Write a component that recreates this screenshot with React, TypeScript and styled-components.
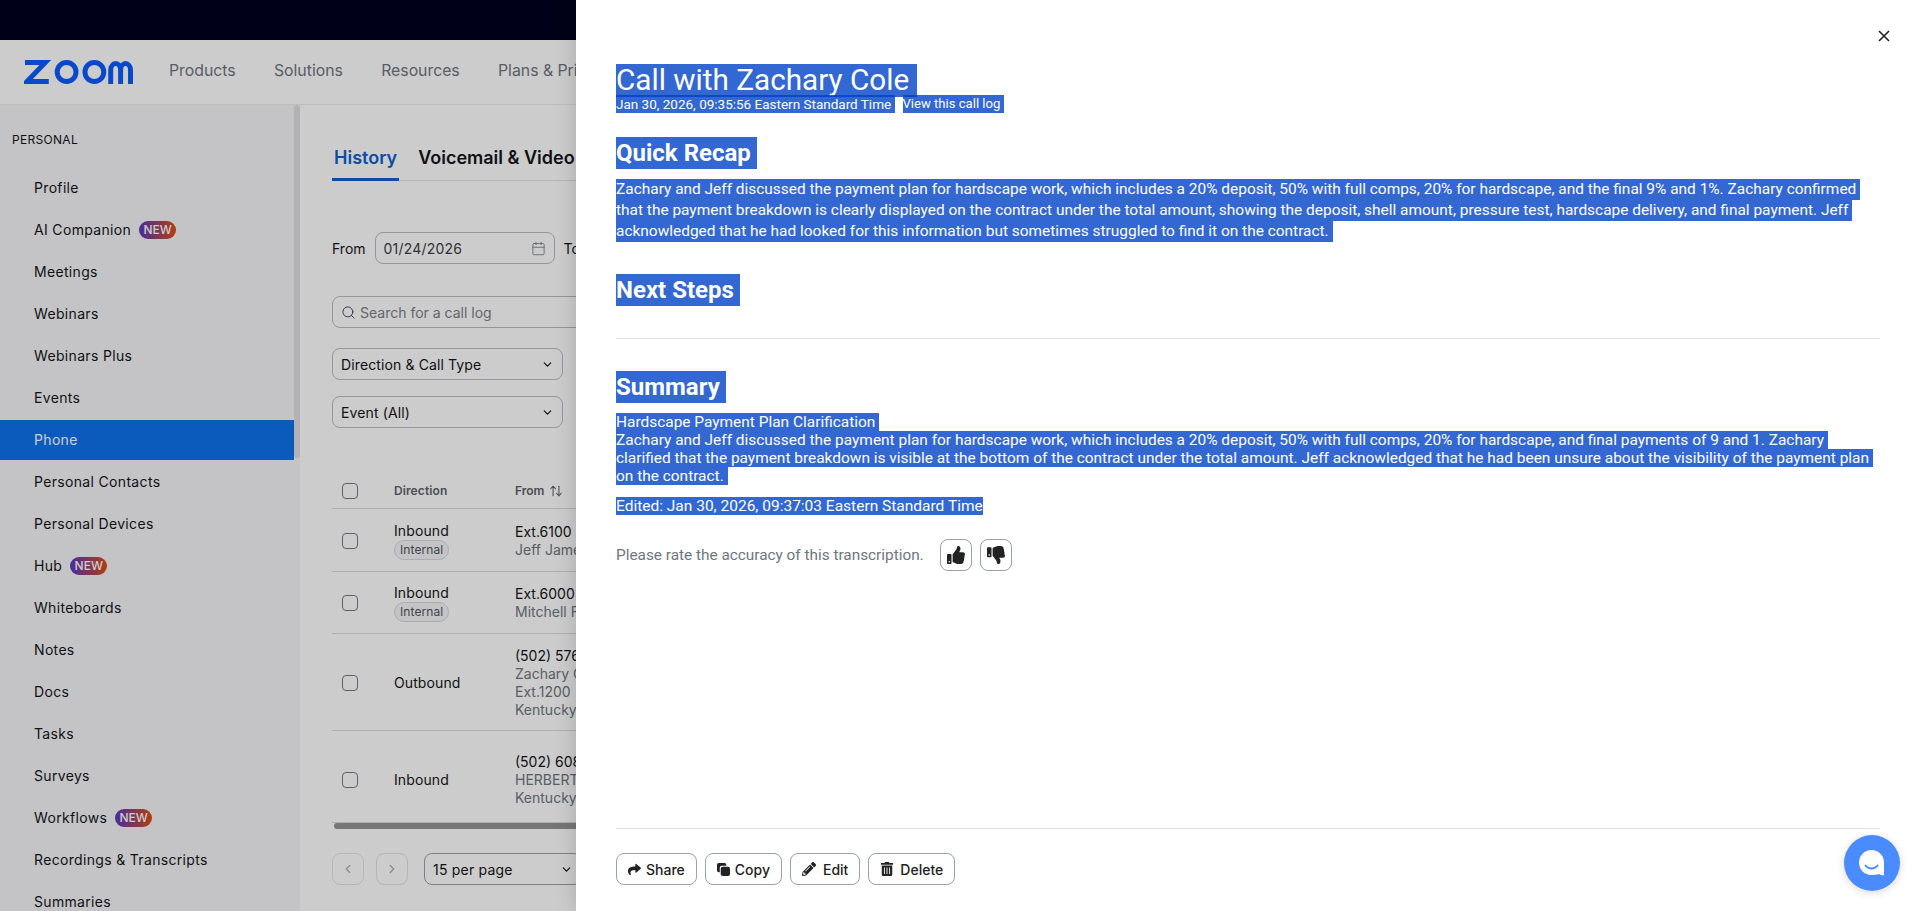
import React from 'react';
import styled, { createGlobalStyle } from 'styled-components';
import { FaShare, FaPencilAlt, FaTrashAlt, FaThumbsUp, FaThumbsDown } from 'react-icons/fa';
import { ArrowUpDown, Calendar, ChevronDown, ChevronLeft, ChevronRight, Search } from 'lucide-react';

const sideItems = [
  { label: 'Profile' },
  { label: 'AI Companion', isNew: true },
  { label: 'Meetings' },
  { label: 'Webinars' },
  { label: 'Webinars Plus' },
  { label: 'Events' },
  { label: 'Phone', active: true },
  { label: 'Personal Contacts' },
  { label: 'Personal Devices' },
  { label: 'Hub', isNew: true },
  { label: 'Whiteboards' },
  { label: 'Notes' },
  { label: 'Docs' },
  { label: 'Tasks' },
  { label: 'Surveys' },
  { label: 'Workflows', isNew: true },
  { label: 'Recordings & Transcripts' },
  { label: 'Summaries' },
];

const rows = [
  { direction: 'Inbound', internal: true, height: 63, from: ['Ext.6100', 'Jeff James'] },
  { direction: 'Inbound', internal: true, height: 62, from: ['Ext.6000', 'Mitchell Ford'] },
  {
    direction: 'Outbound',
    height: 97,
    from: ['(502) 576-0199', 'Zachary Cole', 'Ext.1200', 'Kentucky'],
  },
  { direction: 'Inbound', height: 92, top: 6, from: ['(502) 608-0142', 'HERBERT', 'Kentucky'] },
];

const GlobalStyle = createGlobalStyle`
  html, body {
    margin: 0;
    height: 100%;
    overflow: hidden;
    background: #fff;
    font-family: Inter, "Liberation Sans", sans-serif;
  }
  * {
    box-sizing: border-box;
  }
`;

function ZoomLogo() {
  return (
    <svg width="109" height="24" viewBox="0 0 110 24" fill="none" stroke="#0b5cff" strokeWidth="5">
      <path d="M1 2.500H21.500L3 21.500H25" />
      <circle cx="43" cy="12" r="9.500" />
      <circle cx="71" cy="12" r="9.500" />
      <path d="M87.500 24V10a5 6.500 0 0 1 10 0V24M97.500 10a5 6.500 0 0 1 10 0V24" />
    </svg>
  );
}

function CopyIcon() {
  return (
    <svg width="13" height="13" viewBox="0 0 14 14" fill="currentColor">
      <path d="M1.800 0h6.400A1.800 1.800 0 0 1 10 1.800V3H5a2 2 0 0 0-2 2v5H1.800A1.800 1.800 0 0 1 0 8.200V1.800A1.800 1.800 0 0 1 1.800 0z" />
      <rect x="4" y="4" width="10" height="10" rx="2.200" />
    </svg>
  );
}

function CloseIcon() {
  return (
    <svg width="12" height="12" viewBox="0 0 12 12" fill="none" stroke="#222" strokeWidth="1.600">
      <path d="M1 1L11 11M11 1L1 11" />
    </svg>
  );
}

function BubbleIcon() {
  return (
    <svg width="28" height="28" viewBox="0 0 28 28">
      <path d="M13.500 1C20.500 1 26 6.500 26 13.500V25.500C26 26.300 25.300 26.800 24.500 26.500L20.500 25C18.500 25.800 16 26 13.500 26C6.500 26 1 20.500 1 13.500S6.500 1 13.500 1z" fill="#fff" />
      <path d="M7.500 16.500C10.500 20.500 16.500 20.500 19.500 16.500" fill="none" stroke="#4a8cff" strokeWidth="1.800" strokeLinecap="round" />
    </svg>
  );
}

export default function App() {
  return (
    <Page>
      <GlobalStyle />
      <TopBar />
      <Header>
        <ZoomLogo />
        <NavList>
          <NavLink>Products</NavLink>
          <NavLink>Solutions</NavLink>
          <NavLink>Resources</NavLink>
          <NavLink>Plans &amp; Pricing</NavLink>
        </NavList>
      </Header>

      <Body>
        <Sidebar>
          <SideHeading>PERSONAL</SideHeading>
          {sideItems.map(item => (
            <SideItem key={item.label} $active={item.active}>
              {item.label}
              {item.isNew && <NewBadge>NEW</NewBadge>}
            </SideItem>
          ))}
          <SideScroll />
        </Sidebar>

        <Main>
          <Tabs>
            <Tab $active>History</Tab>
            <Tab>Voicemail &amp; Video</Tab>
          </Tabs>

          <DateRow>
            From
            <DateInput>
              01/24/2026
              <Calendar size={15} strokeWidth={1.3} color="#6e7680" />
            </DateInput>
            To
          </DateRow>

          <SearchBox>
            <Search size={15} strokeWidth={1.5} color="#3b4046" />
            Search for a call log
          </SearchBox>

          <FilterStack>
            <Select>
              Direction &amp; Call Type
              <ChevronDown size={13} strokeWidth={2.2} />
            </Select>
            <Select>
              Event (All)
              <ChevronDown size={13} strokeWidth={2.2} />
            </Select>
          </FilterStack>

          <TableHead>
            <CheckCell>
              <CheckBox />
            </CheckCell>
            <DirectionCell>Direction</DirectionCell>
            <SortCell>
              From
              <ArrowUpDown size={14} strokeWidth={1.8} />
            </SortCell>
          </TableHead>
          {rows.map(row => (
            <TableRow key={row.from[0]} $height={row.height} $top={row.top}>
              <CheckCell>
                <CheckBox />
              </CheckCell>
              <DirectionCell>
                {row.direction}
                {row.internal && <InternalChip>Internal</InternalChip>}
              </DirectionCell>
              <FromCell>
                {row.from.map((line, index) => (
                  <FromLine key={line} $muted={index > 0}>
                    {line}
                  </FromLine>
                ))}
              </FromCell>
            </TableRow>
          ))}
          <TableScroll />

          <Pagination>
            <PageButton>
              <ChevronLeft size={14} />
            </PageButton>
            <PageButton>
              <ChevronRight size={14} />
            </PageButton>
            <PerPage>
              15 per page
              <ChevronDown size={13} strokeWidth={2.2} />
            </PerPage>
          </Pagination>
        </Main>
      </Body>

      <Dim />

      <Panel>
        <CloseButton>
          <CloseIcon />
        </CloseButton>

        <Title>{'Call with Zachary Cole '}</Title>
        <MetaRow>
          <DateMeta>{'Jan 30, 2026, 09:35:56 Eastern Standard Time '}</DateMeta>
          <Meta>{'View this call log '}</Meta>
        </MetaRow>

        <Heading $top={24}>{'Quick Recap '}</Heading>
        <Paragraph>
          <Line>
            {'Zachary and Jeff discussed the payment plan for hardscape work, which includes a 20% deposit, 50% with full comps, 20% for hardscape, and the final 9% and 1%. Zachary confirmed '}
          </Line>
          <Line>
            {'that the payment breakdown is clearly displayed on the contract under the total amount, showing the deposit, shell amount, pressure test, hardscape delivery, and final payment. Jeff '}
          </Line>
          <Line>
            {'acknowledged that he had looked for this information but sometimes struggled to find it on the contract. '}
          </Line>
        </Paragraph>

        <Heading $top={32}>{'Next Steps '}</Heading>
        <Divider />

        <Heading $top={32}>{'Summary '}</Heading>
        <Paragraph>
          <Line $short>{'Hardscape Payment Plan Clarification '}</Line>
          <Line $short>
            {'Zachary and Jeff discussed the payment plan for hardscape work, which includes a 20% deposit, 50% with full comps, 20% for hardscape, and final payments of 9 and 1. Zachary '}
          </Line>
          <Line $short>
            {'clarified that the payment breakdown is visible at the bottom of the contract under the total amount. Jeff acknowledged that he had been unsure about the visibility of the payment plan '}
          </Line>
          <Line $short>{'on the contract. '}</Line>
        </Paragraph>
        <EditedLine>Edited: Jan 30, 2026, 09:37:03 Eastern Standard Time</EditedLine>

        <RatingRow>
          <RatingText>Please rate the accuracy of this transcription.</RatingText>
          <RateButton>
            <FaThumbsUp size={18} />
          </RateButton>
          <RateButton>
            <FaThumbsDown size={18} />
          </RateButton>
        </RatingRow>

        <Footer>
          <ActionButton>
            <FaShare size={13} />
            Share
          </ActionButton>
          <ActionButton>
            <CopyIcon />
            Copy
          </ActionButton>
          <ActionButton $gap={7}>
            <FaPencilAlt size={14} />
            Edit
          </ActionButton>
          <ActionButton $gap={6}>
            <FaTrashAlt size={14} />
            Delete
          </ActionButton>
        </Footer>
      </Panel>

      <ChatBubble>
        <BubbleIcon />
      </ChatBubble>
    </Page>
  );
}

const Page = styled.div`
  width: 1920px;
  height: 911px;
  overflow: hidden;
  position: relative;
  background: #fff;
  color: #131619;
  font-size: 14px;
`;

const TopBar = styled.div`
  height: 40px;
  background: #00001f;
`;

const Header = styled.div`
  height: 65px;
  padding: 0 24px;
  display: flex;
  align-items: center;
  background: #fff;
  border-bottom: 1px solid #ededf0;
`;

const NavList = styled.div`
  margin-left: 36px;
  display: flex;
  gap: 38.3px;
`;

const NavLink = styled.div`
  font-size: 15.8px;
  line-height: 24px;
  color: #6e7680;
  margin-top: -3px;
  white-space: nowrap;
`;

const Body = styled.div`
  display: flex;
  height: 806px;
`;

const Sidebar = styled.div`
  position: relative;
  width: 300px;
  flex-shrink: 0;
  padding-top: 24px;
  background: #f5f5f8;
  overflow: hidden;
`;

const SideScroll = styled.div`
  position: absolute;
  top: 0;
  right: 0;
  width: 6px;
  height: 353px;
  border-radius: 3px;
  background: #dfdfe2;
`;

const SideHeading = styled.div`
  padding-left: 12px;
  height: 39px;
  font-size: 12px;
  line-height: 22px;
  letter-spacing: 0.3px;
  color: #131619;
`;

const SideItem = styled.div<{ $active?: boolean }>`
  width: 294px;
  height: 40px;
  margin-bottom: 2px;
  padding: 0 0 1px 34px;
  display: flex;
  align-items: center;
  gap: 8px;
  font-size: 14px;
  letter-spacing: 0.33px;
  white-space: nowrap;
  background: ${p => (p.$active ? '#0e72ed' : 'transparent')};
  color: ${p => (p.$active ? '#fff' : '#131619')};
`;

const NewBadge = styled.span`
  width: 37px;
  height: 18px;
  border-radius: 9px;
  display: inline-flex;
  align-items: center;
  justify-content: center;
  font-size: 12px;
  font-weight: 500;
  letter-spacing: 0;
  color: #fff;
  background: linear-gradient(90deg, #5b39c4, #e14e12);
`;

const Main = styled.div`
  width: 560px;
  padding: 0 0 0 32px;
  overflow: hidden;
  background: #fff;
`;

const Tabs = styled.div`
  margin-top: 31px;
  height: 45px;
  width: 500px;
  display: flex;
  gap: 17px;
  border-bottom: 1px solid #e3e3e6;
`;

const Tab = styled.div<{ $active?: boolean }>`
  height: 45px;
  padding: 6px 2px 0;
  font-size: 18px;
  line-height: 32px;
  font-weight: 600;
  white-space: nowrap;
  color: ${p => (p.$active ? '#0e5fcf' : '#131619')};
  border-bottom: ${p => (p.$active ? '3px solid #0e5fcf' : 'none')};
`;

const DateRow = styled.div`
  margin-top: 51px;
  display: flex;
  align-items: center;
  gap: 9px;
  height: 32px;
  white-space: nowrap;
  color: #131619;
`;

const DateInput = styled.div`
  width: 180px;
  height: 32px;
  padding: 0 8px;
  display: flex;
  align-items: center;
  justify-content: space-between;
  border: 1px solid #b8bcc4;
  border-radius: 8px;
  color: #3b4046;
  letter-spacing: 0.2px;
`;

const SearchBox = styled.div`
  margin-top: 32px;
  width: 500px;
  height: 32px;
  padding: 0 8px;
  display: flex;
  align-items: center;
  gap: 4px;
  border: 1px solid #b8bcc4;
  border-radius: 8px;
  color: #7a808a;
`;

const FilterStack = styled.div`
  margin-top: 20px;
  display: flex;
  flex-direction: column;
  gap: 16px;
`;

const Select = styled.div`
  width: 231px;
  height: 32px;
  padding: 0 8px;
  display: flex;
  align-items: center;
  justify-content: space-between;
  border: 1px solid #b8bcc4;
  border-radius: 8px;
  white-space: nowrap;
  letter-spacing: 0.12px;
`;

const TableHead = styled.div`
  margin-top: 45px;
  height: 36px;
  width: 500px;
  display: flex;
  align-items: center;
  font-size: 12px;
  font-weight: 600;
  color: #5d636b;
  border-bottom: 1px solid #d9dbdf;
`;

const TableRow = styled.div<{ $height: number; $top?: number }>`
  height: ${p => p.$height}px;
  width: 500px;
  padding-top: ${p => p.$top ?? 1}px;
  display: flex;
  align-items: center;
  border-bottom: 1px solid #d9dbdf;

  &:last-of-type {
    border-bottom: none;
  }
`;

const CheckCell = styled.div`
  width: 62px;
  padding-left: 10px;
  flex-shrink: 0;
`;

const CheckBox = styled.div`
  width: 16px;
  height: 16px;
  border: 1px solid #767b84;
  border-radius: 4px;
  background: #fff;
`;

const DirectionCell = styled.div`
  width: 121px;
  flex-shrink: 0;
  display: flex;
  flex-direction: column;
  align-items: flex-start;
  line-height: 18px;
  letter-spacing: 0.1px;
`;

const InternalChip = styled.span`
  height: 20px;
  padding: 0 5px;
  display: inline-flex;
  align-items: center;
  border: 1px solid #d7d9dd;
  border-radius: 10px;
  background: #f5f5f8;
  font-size: 12px;
  color: #4f555c;
`;

const FromCell = styled.div`
  line-height: 18px;
  white-space: nowrap;
`;

const SortCell = styled.div`
  display: flex;
  align-items: center;
  gap: 5px;
`;

const FromLine = styled.div<{ $muted?: boolean }>`
  color: ${p => (p.$muted ? '#6e7680' : '#131619')};
`;

const TableScroll = styled.div`
  width: 500px;
  height: 6px;
  margin-left: 2px;
  border-radius: 3px;
  background: #949494;
`;

const Pagination = styled.div`
  margin-top: 24px;
  display: flex;
  gap: 12px;
`;

const PageButton = styled.div`
  width: 32px;
  height: 32px;
  display: flex;
  align-items: center;
  justify-content: center;
  border: 1px solid #e3e3e6;
  border-radius: 8px;
  color: #a8acb3;
`;

const PerPage = styled.div`
  margin-left: 4px;
  width: 158px;
  height: 32px;
  padding: 0 8px;
  display: flex;
  align-items: center;
  justify-content: space-between;
  border: 1px solid #9ca1aa;
  border-radius: 8px;
  letter-spacing: 0.2px;
`;

const Dim = styled.div`
  position: absolute;
  inset: 0;
  background: rgba(0, 0, 0, 0.2);
`;

const Panel = styled.div`
  position: absolute;
  top: 0;
  right: 0;
  width: 1344px;
  height: 911px;
  padding: 64px 40px 26px;
  display: flex;
  flex-direction: column;
  align-items: flex-start;
  background: #fff;
  box-shadow: 0 0 20px rgba(0, 0, 0, 0.18);
  font-family: Roboto, "Liberation Sans", sans-serif;
`;

const CloseButton = styled.div`
  position: absolute;
  top: 30px;
  right: 30px;
  display: flex;
`;

const selected = `
  display: block;
  width: fit-content;
  white-space: pre;
  color: #fff;
  background: rgba(0, 65, 198, 0.8);
`;

const Title = styled.div`
  ${selected}
  height: 33px;
  margin-bottom: -2px;
  font-size: 29.7px;
  line-height: 31px;
`;

const MetaRow = styled.div`
  display: flex;
  gap: 8px;
`;

const Meta = styled.div`
  ${selected}
  height: 18px;
  font-size: 13.1px;
  line-height: 18px;
`;

const DateMeta = styled(Meta)`
  font-size: 13.5px;
`;

const Heading = styled.div<{ $top: number }>`
  ${selected}
  margin-top: ${p => p.$top}px;
  height: 32px;
  font-size: 24px;
  line-height: 32px;
  font-weight: 700;
`;

const Paragraph = styled.div`
  margin-top: 10px;
`;

const Line = styled.div<{ $short?: boolean }>`
  ${selected}
  font-size: 15.45px;
  line-height: ${p => (p.$short ? 18 : 21)}px;
`;

const EditedLine = styled.div`
  ${selected}
  margin-top: 12px;
  font-size: 15.5px;
  line-height: 18px;
`;

const Divider = styled.div`
  width: 100%;
  height: 1px;
  margin-top: 32px;
  background: #e3e3e6;
`;

const RatingRow = styled.div`
  margin-top: 24px;
  display: flex;
  align-items: center;
  gap: 8px;
`;

const RatingText = styled.div`
  margin-right: 8px;
  font-size: 15.35px;
  color: #6e7680;
`;

const RateButton = styled.div`
  width: 32px;
  height: 32px;
  display: flex;
  align-items: center;
  justify-content: center;
  border: 1px solid #9ca1aa;
  border-radius: 8px;
  color: #222;
`;

const Footer = styled.div`
  margin-top: auto;
  width: 100%;
  padding-top: 24px;
  display: flex;
  gap: 8px;
  border-top: 1px solid #e3e3e6;
`;

const ActionButton = styled.div<{ $gap?: number }>`
  height: 32px;
  padding: 0 11px;
  display: flex;
  align-items: center;
  gap: ${p => p.$gap ?? 5}px;
  border: 1px solid #9ca1aa;
  border-radius: 8px;
  font-family: Inter, "Liberation Sans", sans-serif;
  font-size: 14px;
  font-weight: 500;
  color: #222;
`;

const ChatBubble = styled.div`
  position: absolute;
  right: 20px;
  bottom: 20px;
  width: 56px;
  height: 56px;
  display: flex;
  align-items: center;
  justify-content: center;
  border-radius: 50%;
  background: #4a8cff;
  box-shadow: 0 2px 8px rgba(0, 0, 0, 0.15);
`;
